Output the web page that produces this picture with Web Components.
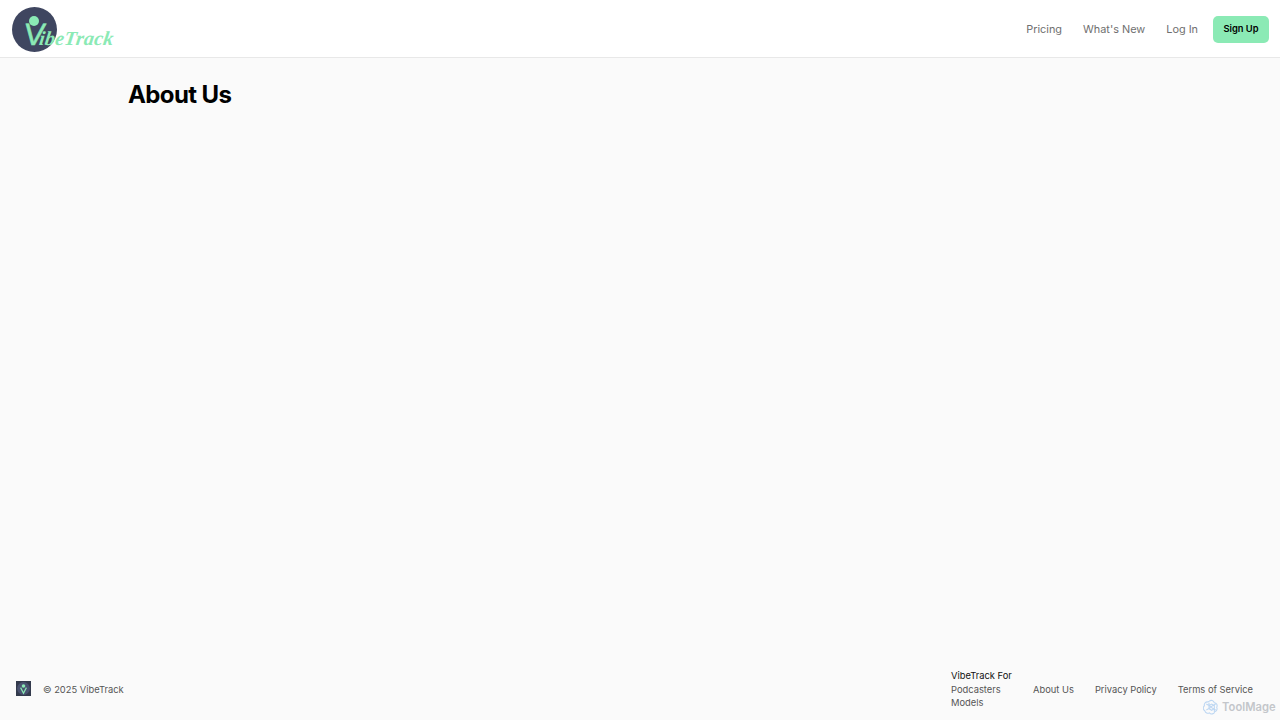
<!DOCTYPE html>
<html lang="en"><head><meta charset="utf-8"><title>About Us - VibeTrack</title>
<style>
html,body{margin:0;height:100%}
body{font-family:Inter,"Liberation Sans",sans-serif;background:#fafafa}
vt-app{height:720px}
</style></head><body>
<vt-app>
  <vt-header></vt-header>
  <vt-page heading="About Us"></vt-page>
  <vt-footer></vt-footer>
  <vt-watermark></vt-watermark>
</vt-app>
<script>
function def(name, html){
  customElements.define(name, class extends HTMLElement{
    constructor(){super();this.attachShadow({mode:'open'}).innerHTML=html;}
  });
}
def('vt-app',`<style>:host{display:flex;flex-direction:column;position:relative;overflow:hidden}</style><slot></slot>`);
def('vt-logo',`<style>
:host{display:block;position:relative;width:102px;height:45px}
.c{display:block}
.t{position:absolute;left:12px;top:13px;white-space:nowrap;color:#8beab5;font-family:"Liberation Serif",serif;font-style:italic;line-height:30px;font-size:20px;font-weight:700;transform:skewX(-8deg);letter-spacing:.2px}
.v{font-family:"Liberation Sans",sans-serif;font-style:normal;font-size:31px;font-weight:400;letter-spacing:-5px;-webkit-text-stroke:.5px #8beab5}
</style>
<svg class="c" width="45" height="45" viewBox="0 0 45 45"><circle cx="22.5" cy="22.5" r="22.5" fill="#3f4660"/><circle cx="22" cy="14" r="5" fill="#8beab5"/></svg>
<span class="t"><span class="v">V</span>ibeTrack</span>`);
def('vt-header',`<style>
:host{display:flex;align-items:center;justify-content:space-between;box-sizing:border-box;height:58px;padding:2px 11px 0 11.5px;background:#fff;border-bottom:1px solid #e8e8e8;flex:none}
nav{display:flex;align-items:center;gap:21px;font-size:10.9px;color:#6f6f6f;padding-bottom:2px}
a{color:inherit;text-decoration:none}
.btn{display:block;margin:2px 0 0 -6px;padding:0 10.5px;height:27px;line-height:26px;background:#8beab5;border-radius:5px;color:#000;font-weight:600;font-size:9.3px}
</style>
<vt-logo></vt-logo>
<nav><a href="#">Pricing</a><a href="#">What's New</a><a href="#">Log In</a><a class="btn" href="#">Sign Up</a></nav>`);
def('vt-page',`<style>
:host{display:block;flex:1;padding:21px 128px 0;background:#fafafa}
h1{margin:0;font-size:24px;line-height:32px;font-weight:700;color:#000;letter-spacing:-.6px}
</style><h1>About Us</h1>`);
def('vt-footer',`<style>
:host{display:flex;align-items:center;justify-content:space-between;box-sizing:border-box;height:62px;padding:0 27px 0 16px;flex:none;font-size:9.35px;color:#555}
.l{display:flex;align-items:center;gap:12px}
.l svg{display:block;margin-bottom:2px}
.r{display:flex;align-items:center;gap:21px}
.col{display:flex;flex-direction:column;line-height:13.5px;width:61px;margin-top:1px}
.col b{font-weight:400;color:#111;white-space:nowrap}
</style>
<div class="l"><svg width="15" height="15" viewBox="0 0 15 15"><rect width="15" height="15" fill="#333a4c"/><circle cx="7.5" cy="7.5" r="6.4" fill="#4a5270"/><circle cx="7.5" cy="5" r="1.8" fill="#8beab5"/><path d="M4.6 6.6 7.5 12.2 10.4 6.6" fill="none" stroke="#8beab5" stroke-width="1.2"/></svg><span>© 2025 VibeTrack</span></div>
<div class="r"><div class="col"><b>VibeTrack For</b><span>Podcasters</span><span>Models</span></div><span>About Us</span><span>Privacy Policy</span><span>Terms of Service</span></div>`);
def('vt-watermark',`<style>
:host{position:absolute;right:4.5px;bottom:4px;display:flex;align-items:center;gap:3px;color:#c3c6ca;font-size:11.2px;font-weight:600;line-height:17px}
svg{margin-bottom:1px}
</style>
<svg width="16" height="16" viewBox="0 0 24 24" fill="none" stroke="#bcd6f2" stroke-width="1.6"><path d="M9.5 3.2a4.6 4.6 0 0 1 7.4 2.3 4.6 4.6 0 0 1 3.6 7 4.6 4.6 0 0 1-3 6.7 4.6 4.6 0 0 1-7.9 1.6 4.6 4.6 0 0 1-6.8-3.1 4.6 4.6 0 0 1-.7-7.6 4.6 4.6 0 0 1 5.4-5.7z"/><path d="M9 5.5v9l4 2.4 4-2.4M17 19V10l-4-2.4L9 10M5 7.5l7 4 7-4M5 16.5l7-4 7 4"/></svg><span>ToolMage</span>`);
</script>
</body></html>
